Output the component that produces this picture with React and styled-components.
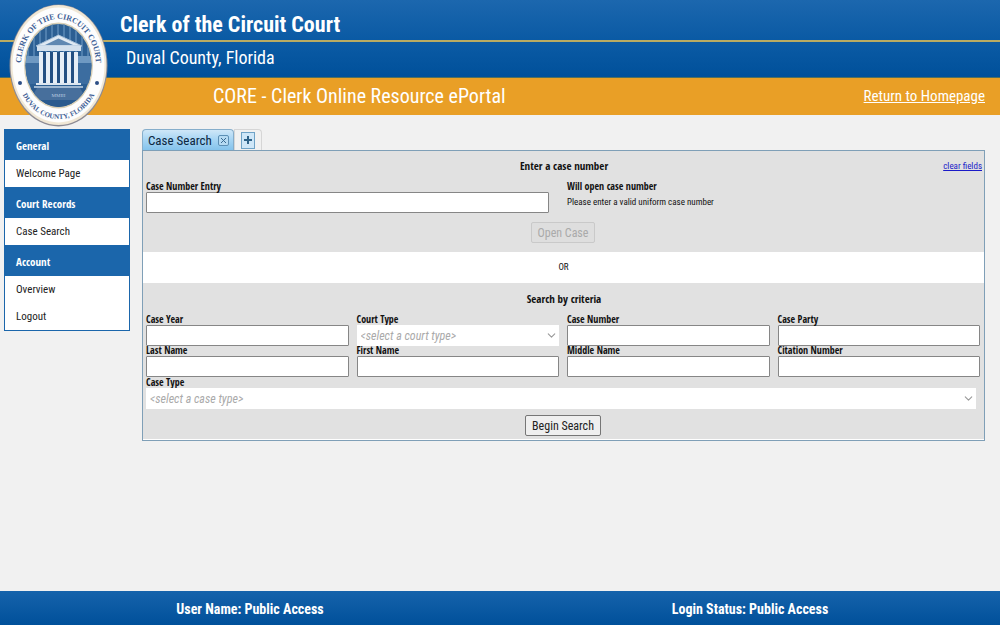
import React, { useState } from 'react'
import styled, { createGlobalStyle } from 'styled-components'
import { ChevronDown } from 'lucide-react'

const GlobalStyle = createGlobalStyle`
  * {
    box-sizing: border-box;
  }
  body {
    margin: 0;
    background: #f1f1f1;
    color: #111;
    font-size: 10px;
  }
  body, button, input, select {
    font-family: "Roboto Condensed", Roboto, "Liberation Sans", sans-serif;
  }
`
const Page = styled.div`
  display: flex;
  flex-direction: column;
  min-height: 100vh;
`

// header

const Header = styled.header`
  position: relative;
  color: #fff;
`
const TitleBar = styled.div`
  height: 42px;
  padding: 9px 0 0 120px;
  background: linear-gradient(#1c67ae, #0a5aa4);
  border-bottom: 2px solid #b9ab62;
`
const Title = styled.h1`
  margin: 0;
  font-size: 22px;
  line-height: 32px;
  font-weight: bold;
`
const CountyBar = styled.div`
  height: 36px;
  padding-left: 126px;
  background: linear-gradient(#0b5ba5, #00509a);
  border-bottom: 1px solid #50705f;
  font-size: 18px;
  line-height: 31px;
`
const PortalBar = styled.div`
  display: flex;
  justify-content: space-between;
  align-items: center;
  height: 37px;
  padding: 0 15px 1px 213px;
  background: #e99f26;
  font-size: 20px;
`
const HomeLink = styled.a`
  color: #fff;
  font-size: 15px;
`
const Seal = styled.svg`
  position: absolute;
  left: 9px;
  top: 4px;
  width: 99px;
  height: 123px;
`

// left menu

const Body = styled.div`
  display: flex;
  align-items: flex-start;
  flex: 1;
  gap: 12px;
  padding: 14px 15px 24px 4px;
`
const Menu = styled.nav`
  flex: 0 0 126px;
  background: #fff;
  border: solid #1b66ab;
  border-width: 0 1px 1px;
  font-size: 11px;
`
const MenuHead = styled.div`
  height: 31px;
  padding: 1px 0 0 11px;
  background: #1b66ab;
  color: #fff;
  font-family: "Open Sans Condensed", "Open Sans", sans-serif;
  font-weight: bold;
  line-height: 31px;
`
const MenuLink = styled.a`
  display: block;
  padding-left: 11px;
  color: #222;
  line-height: 27px;
  text-decoration: none;
`

// tabs

const Main = styled.main`
  flex: 1;
  min-width: 0;
`
const Tabs = styled.div`
  display: flex;
  height: 21px;
`
const Tab = styled.div`
  display: flex;
  align-items: center;
  gap: 6px;
  padding: 0 4px 0 5px;
  border: 1px solid #86aecb;
  border-bottom: 0;
  border-radius: 4px 4px 0 0;
  background: linear-gradient(#cfe7f8, #a9d6f4 45%, #84c3ec);
`
const TabName = styled.button`
  padding: 2px 0 0;
  border: 0;
  background: none;
  color: #0c2740;
  font-size: 13px;
  line-height: 20px;
`
const TabClose = styled.button`
  display: flex;
  align-items: center;
  justify-content: center;
  width: 11px;
  height: 11px;
  padding: 0;
  border: 1px solid #5c8fb5;
  border-radius: 2px;
  background: #b5daf2;
`
const AddTab = styled.div`
  display: flex;
  align-items: center;
  padding: 0 6px;
  border: 1px solid #d6d6d6;
  border-bottom: 0;
  border-radius: 0 4px 0 0;
`
const AddButton = styled.button`
  display: flex;
  align-items: center;
  justify-content: center;
  width: 14px;
  height: 17px;
  padding: 0;
  border: 1px solid #6fa3c7;
  background: #cfe7f8;
`

// search form

const Panel = styled.form`
  background: #fff;
  border: 1px solid #7f9fb7;
  padding-bottom: 1px;
`
const Section = styled.section`
  background: #e1e1e1;
  padding: 0 4px ${p => p.$bottom}px 3px;
`
const SectionHead = styled.div`
  display: grid;
  grid-template-columns: 1fr auto 1fr;
  align-items: center;
  height: ${p => p.$height}px;
  margin-right: -2px;
  padding-bottom: 2px;
`
const SectionTitle = styled.h2`
  grid-column: 2;
  margin: 0;
  font-family: "Open Sans Condensed", "Open Sans", sans-serif;
  font-size: 11px;
`
const ClearLink = styled.a`
  justify-self: end;
  color: #1a1ac8;
  font-size: 9px;
`
const Grid = styled.div`
  display: grid;
  grid-template-columns: repeat(4, minmax(0, 1fr));
  column-gap: 8px;
`
const Field = styled.div`
  grid-column: span ${p => p.$span || 1};
  padding: ${p => p.$top || 0}px ${p => p.$right || 0}px 0 0;
`
const Label = styled.label`
  display: block;
  padding-bottom: 2px;
  font-family: "Open Sans Condensed", "Open Sans", sans-serif;
  font-weight: bold;
  line-height: 8px;
  white-space: nowrap;
`
const Input = styled.input`
  display: block;
  width: 100%;
  height: 21px;
  border: 1px solid #868686;
  border-radius: 1px;
  background: #fff;
`
const SelectBox = styled.div`
  position: relative;
  color: #999;
  & svg {
    position: absolute;
    right: 1px;
    top: 4px;
    pointer-events: none;
  }
`
const Select = styled.select`
  display: block;
  appearance: none;
  width: 100%;
  height: 21px;
  padding: 0 4px;
  border: 0;
  background: #fff;
  color: #aaa;
  font-size: 12px;
  font-style: italic;
`
const Hint = styled.p`
  margin: 0;
  font-size: 9px;
  line-height: 21px;
`
const Actions = styled.div`
  display: flex;
  justify-content: center;
  padding-top: ${p => p.$top}px;
`
const Button = styled.button`
  height: 21px;
  padding: 0 6px;
  border: 1px solid #767676;
  border-radius: 2px;
  background: #efefef;
  color: #222;
  font-size: 12px;
  &:disabled {
    border-color: #c9c9c9;
    background: #dedede;
    color: #aaa;
  }
`
const Or = styled.div`
  text-align: center;
  font-size: 9px;
  line-height: 31px;
`

const Footer = styled.footer`
  display: flex;
  height: 34px;
  background: linear-gradient(#1663ab, #00509a);
  color: #fff;
  font-size: 14px;
  font-weight: bold;
  line-height: 36px;
  text-align: center;
  & div {
    flex: 1;
  }
`

const MENU = [
  { name: 'General', links: ['Welcome Page'] },
  { name: 'Court Records', links: ['Case Search'] },
  { name: 'Account', links: ['Overview', 'Logout'] },
]
const FIELDS = [
  { id: 'year', label: 'Case Year' },
  { id: 'court', label: 'Court Type', empty: '<select a court type>' },
  { id: 'number', label: 'Case Number' },
  { id: 'party', label: 'Case Party' },
  { id: 'last', label: 'Last Name' },
  { id: 'first', label: 'First Name' },
  { id: 'middle', label: 'Middle Name' },
  { id: 'citation', label: 'Citation Number' },
  { id: 'type', label: 'Case Type', empty: '<select a case type>', span: 4, right: 4, top: 1 },
]
const STRIPES = [18, 24, 30, 36, 42, 48, 54, 60, 66, 72, 78]
const COLUMNS = [30, 37, 44, 51, 58, 65]

function CourtSeal () {
  return (
    <Seal viewBox="0 0 99 123" role="img" aria-label="Seal of the Clerk of the Circuit Court">
      <defs>
        <path id="sealTop" d="M12.500 69 A37.500 46.500 0 1 1 86.500 69" />
        <path id="sealBottom" d="M10.500 84 A43 53.500 0 0 0 88.500 84" />
        <clipPath id="sealInner"><ellipse cx="49.500" cy="61.500" rx="33" ry="41.500" /></clipPath>
      </defs>
      <ellipse cx="49.500" cy="61.500" rx="49" ry="61" fill="#8d8b94" />
      <ellipse cx="49.500" cy="61" rx="48" ry="60" fill="#f0e7d5" />
      <ellipse cx="49.500" cy="61" rx="46" ry="57.500" fill="#fdfdfd" />
      <ellipse cx="49.500" cy="61.500" rx="34.500" ry="43" fill="#d8cfb6" />
      <g clipPath="url(#sealInner)">
        <rect x="14" y="17" width="72" height="90" fill="#2c5f93" />
        {STRIPES.map(x => <rect key={x} x={x} y="17" width="2" height="35" fill="#4f7fae" />)}
        <rect x="14" y="52" width="72" height="7" fill="#6f99c2" />
        <rect x="14" y="59" width="72" height="21" fill="#3c6da0" />
        <path d="M12 84 H87 V107 H12 Z" fill="#2a5a8e" />
        <path d="M28 84 H71 L78 96 H21 Z" fill="#476f9c" />
      </g>
      <path d="M27 42 L49.500 31 L73 42 Z" fill="#dfe9f3" stroke="#a9c1d8" strokeWidth="1" />
      <path d="M36 41 L49.500 34.500 L64 41 Z" fill="#5f88b2" />
      <rect x="28" y="42" width="44" height="5" fill="#d3e0ed" />
      <rect x="30" y="48" width="39" height="31" fill="#234f82" />
      {COLUMNS.map(x => <rect key={x} x={x} y="48" width="4" height="31" fill="#e6eef6" />)}
      <rect x="27" y="79" width="45" height="2" fill="#dce6f0" />
      <rect x="25" y="82" width="49" height="2" fill="#9fb8d2" />
      <text x="49.500" y="93" fontSize="5" fill="#b9cbe0" textAnchor="middle" fontFamily="Liberation Serif, serif">MMIII</text>
      <g fill="#3f5f96" fontFamily="Liberation Serif, serif" fontWeight="bold">
        <text fontSize="8" textAnchor="middle"><textPath href="#sealTop" startOffset="50%">CLERK OF THE CIRCUIT COURT</textPath></text>
        <text fontSize="7" textAnchor="middle"><textPath href="#sealBottom" startOffset="50%">DUVAL COUNTY, FLORIDA</textPath></text>
      </g>
      <circle cx="11" cy="79" r="2" fill="#2d4f86" />
      <circle cx="88" cy="79" r="2" fill="#2d4f86" />
    </Seal>
  )
}

function Criterion ({ field, value, onChange }) {
  return (
    <Field $span={field.span} $right={field.right} $top={field.top}>
      <Label htmlFor={field.id}>{field.label}</Label>
      {field.empty
        ? (
          <SelectBox>
            <Select id={field.id} value={value} onChange={onChange}>
              <option value="">{field.empty}</option>
            </Select>
            <ChevronDown size={13} />
          </SelectBox>
          )
        : <Input id={field.id} value={value} onChange={onChange} />}
    </Field>
  )
}

export default function App () {
  const [caseNumber, setCaseNumber] = useState('')
  const [criteria, setCriteria] = useState({})

  const handleClear = e => {
    e.preventDefault()
    setCaseNumber('')
    setCriteria({})
  }

  return (
    <Page>
      <GlobalStyle />
      <Header>
        <TitleBar><Title>Clerk of the Circuit Court</Title></TitleBar>
        <CountyBar>Duval County, Florida</CountyBar>
        <PortalBar>
          <span>CORE - Clerk Online Resource ePortal</span>
          <HomeLink href="#home">Return to Homepage</HomeLink>
        </PortalBar>
        <CourtSeal />
      </Header>

      <Body>
        <Menu>
          {MENU.map(group => (
            <React.Fragment key={group.name}>
              <MenuHead>{group.name}</MenuHead>
              {group.links.map(link => <MenuLink key={link} href="#menu">{link}</MenuLink>)}
            </React.Fragment>
          ))}
        </Menu>

        <Main>
          <Tabs>
            <Tab>
              <TabName type="button">Case Search</TabName>
              <TabClose type="button" aria-label="Close tab">
                <svg width="5" height="5" viewBox="0 0 5 5" stroke="#3b6b92"><path d="M0 0 L5 5 M5 0 L0 5" /></svg>
              </TabClose>
            </Tab>
            <AddTab>
              <AddButton type="button" aria-label="New tab">
                <svg width="8" height="8" viewBox="0 0 8 8" stroke="#2f6288" strokeWidth="2"><path d="M0 4 H8 M4 0 V8" /></svg>
              </AddButton>
            </AddTab>
          </Tabs>

          <Panel onSubmit={e => e.preventDefault()}>
            <Section $bottom={9}>
              <SectionHead $height={31}>
                <SectionTitle>Enter a case number</SectionTitle>
                <ClearLink href="#clear" onClick={handleClear}>clear fields</ClearLink>
              </SectionHead>
              <Grid>
                <Field $span={2} $right={10}>
                  <Label htmlFor="entry">Case Number Entry</Label>
                  <Input id="entry" value={caseNumber} onChange={e => setCaseNumber(e.target.value)} />
                </Field>
                <Field $span={2}>
                  <Label as="div">Will open case number</Label>
                  <Hint>Please enter a valid uniform case number</Hint>
                </Field>
              </Grid>
              <Actions $top={9}>
                <Button type="button" disabled={!caseNumber}>Open Case</Button>
              </Actions>
            </Section>

            <Or>OR</Or>

            <Section $bottom={3}>
              <SectionHead $height={32}>
                <SectionTitle>Search by criteria</SectionTitle>
              </SectionHead>
              <Grid>
                {FIELDS.map(field => (
                  <Criterion
                    key={field.id}
                    field={field}
                    value={criteria[field.id] || ''}
                    onChange={e => setCriteria({ ...criteria, [field.id]: e.target.value })}
                  />
                ))}
              </Grid>
              <Actions $top={6}>
                <Button type="submit">Begin Search</Button>
              </Actions>
            </Section>
          </Panel>
        </Main>
      </Body>

      <Footer>
        <div>User Name: Public Access</div>
        <div>Login Status: Public Access</div>
      </Footer>
    </Page>
  )
}
